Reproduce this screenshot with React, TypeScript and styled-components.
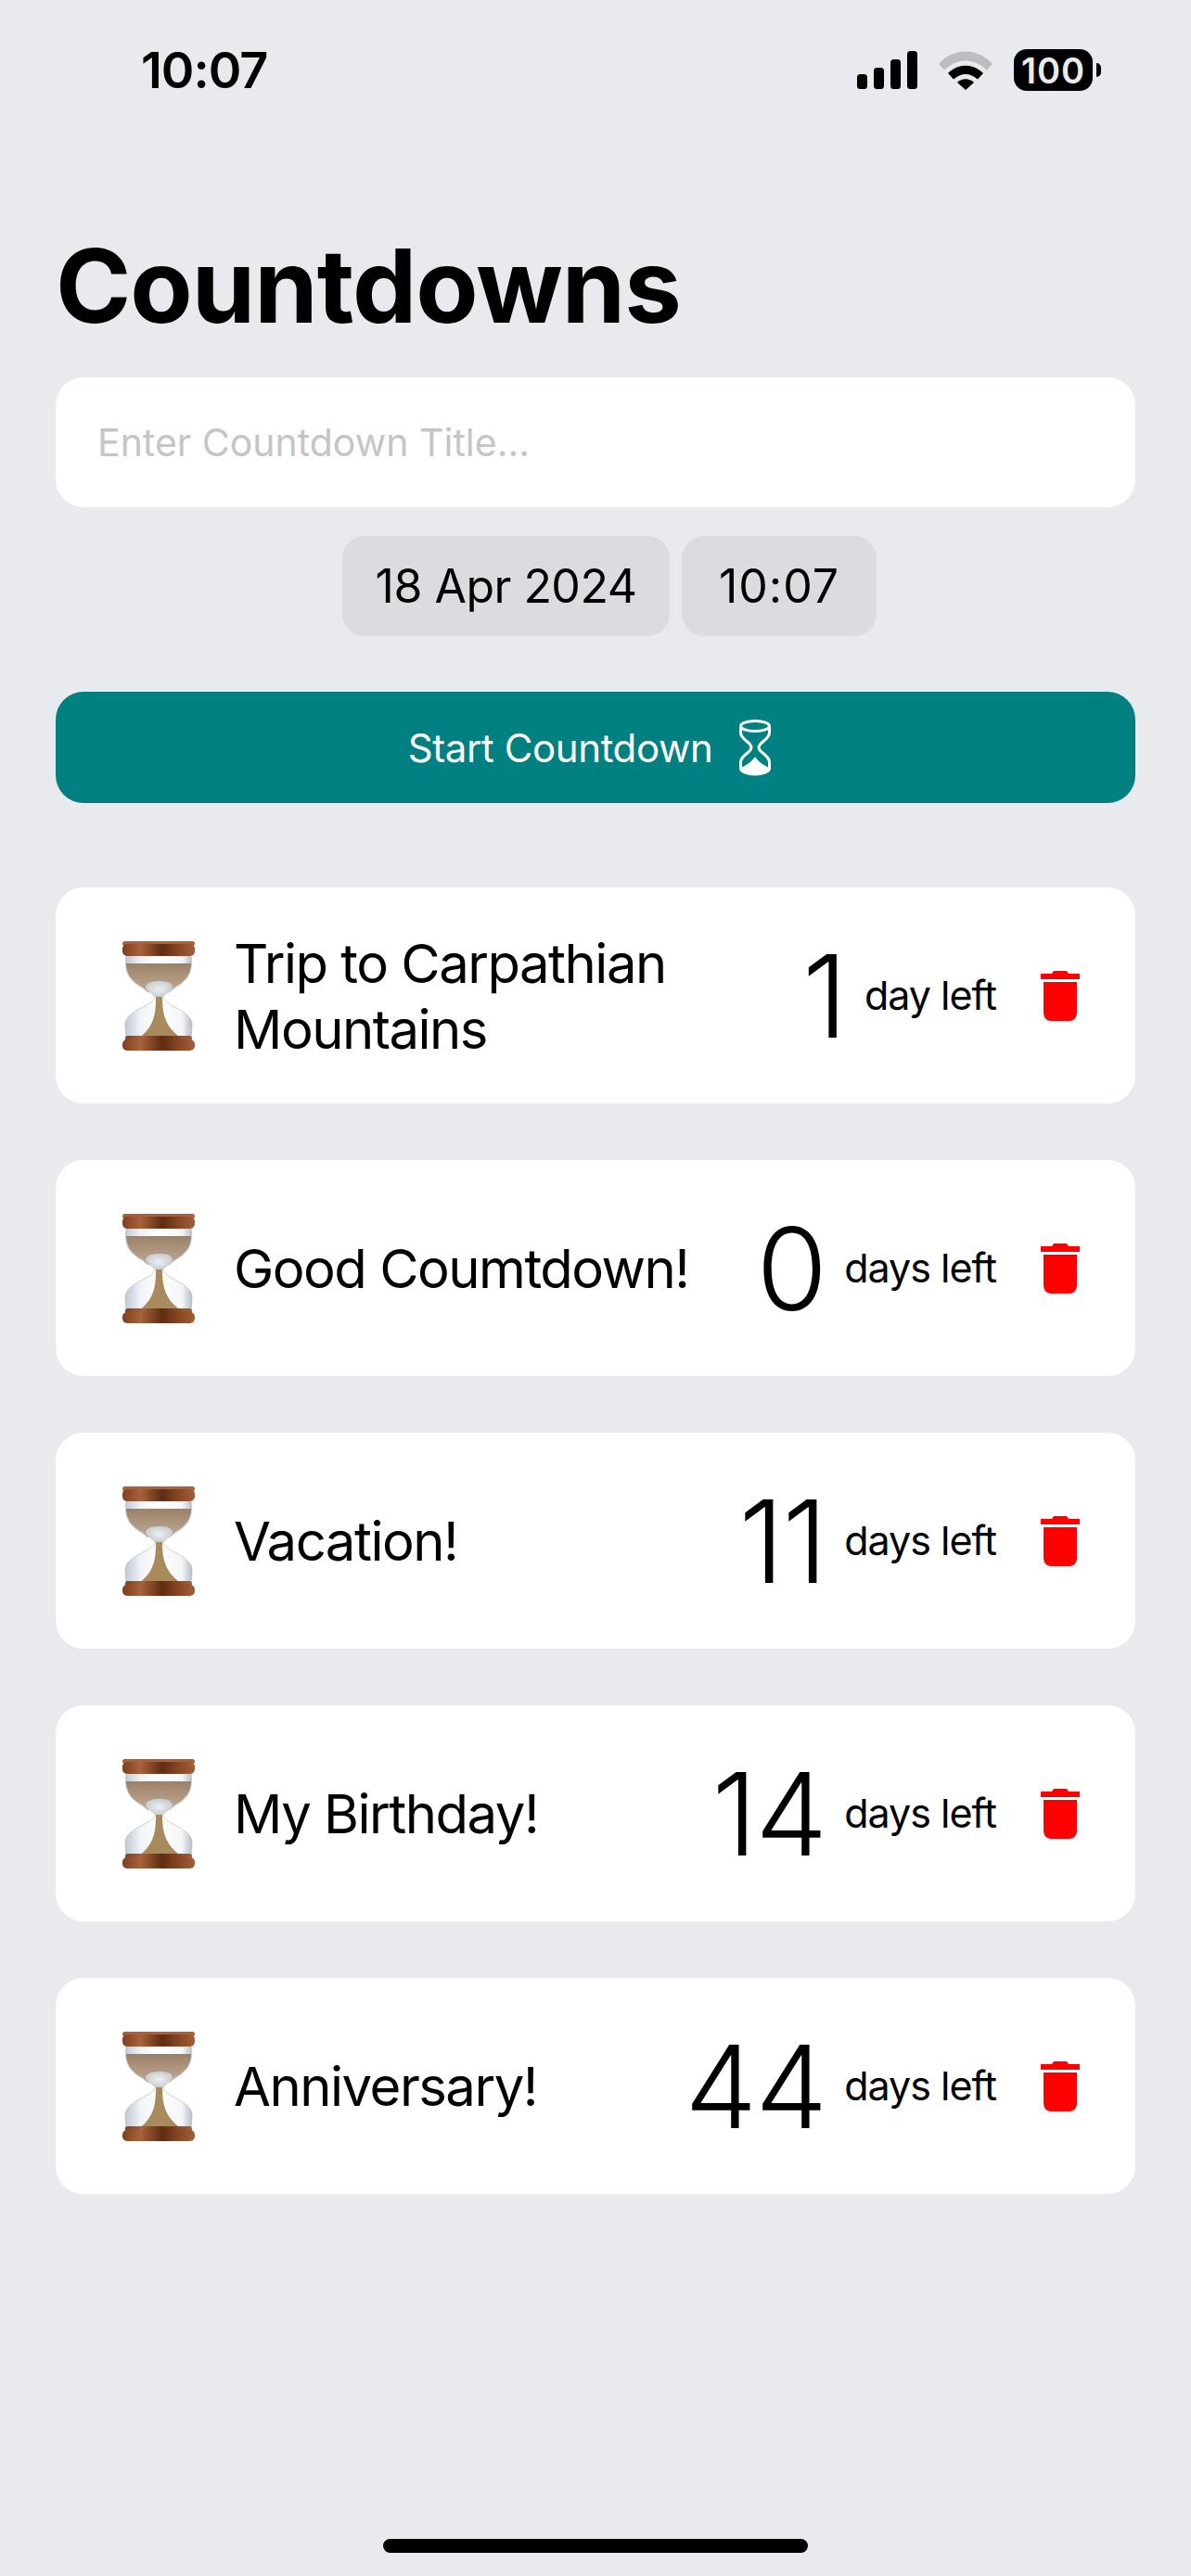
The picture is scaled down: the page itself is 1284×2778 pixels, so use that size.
import * as React from "react";
import styled, { createGlobalStyle } from "styled-components";

const countdowns = [
  { title: "Trip to Carpathian Mountains", days: 1, unit: "day left" },
  { title: "Good Coumtdown!", days: 0, unit: "days left" },
  { title: "Vacation!", days: 11, unit: "days left" },
  { title: "My Birthday!", days: 14, unit: "days left" },
  { title: "Anniversary!", days: 44, unit: "days left" },
];

const GlobalStyle = createGlobalStyle`
  html, body {
    margin: 0;
    padding: 0;
    background: #e9eaee;
  }
  * {
    box-sizing: border-box;
  }
`;

const Page = styled.div`
  width: 1284px;
  height: 2778px;
  display: flex;
  flex-direction: column;
  background: #e9eaee;
  color: #000;
  font-family: Inter, "Liberation Sans", sans-serif;
`;
const StatusBar = styled.div`
  height: 150px;
  padding: 45px 98px 0 152px;
  display: flex;
  justify-content: space-between;
  align-items: flex-start;
`;
const Clock = styled.span`
  font-size: 54px;
  line-height: 62px;
  font-weight: 600;
  letter-spacing: -1px;
`;
const StatusIcons = styled.div`
  display: flex;
  align-items: center;
  gap: 23px;
  padding-top: 8px;
`;
const Battery = styled.div`
  width: 85px;
  height: 45px;
  margin-right: 8px;
  border-radius: 14px;
  background: #000;
  color: #e9eaee;
  font-size: 38px;
  line-height: 46px;
  font-weight: 600;
  letter-spacing: 1px;
  text-align: center;
  position: relative;
  &::after {
    content: "";
    position: absolute;
    right: -9px;
    top: 15px;
    width: 5px;
    height: 15px;
    border-radius: 0 8px 8px 0;
    background: #000;
  }
`;
const Content = styled.main`
  padding: 0 60px;
  display: flex;
  flex-direction: column;
`;
const Title = styled.h1`
  margin: 127px 0 0;
  font-size: 110px;
  line-height: 62px;
  height: 62px;
  font-weight: 700;
  letter-spacing: -1px;
`;
const TitleInput = styled.input`
  margin-top: 68px;
  height: 140px;
  width: 100%;
  border: 0;
  outline: 0;
  border-radius: 30px;
  background: #fff;
  padding: 0 45px;
  font-family: inherit;
  font-size: 41px;
  color: #000;
  &::placeholder {
    color: #c5c5c7;
    opacity: 1;
  }
`;
const PickerRow = styled.div`
  margin-top: 31px;
  padding-left: 30px;
  display: flex;
  justify-content: center;
  gap: 13px;
`;
const Chip = styled.div<{ $width: number; $tracking: number }>`
  width: ${(props) => props.$width}px;
  height: 108px;
  border-radius: 24px;
  background: #dbdce0;
  display: flex;
  align-items: center;
  justify-content: center;
  font-size: 50px;
  letter-spacing: ${(props) => props.$tracking}px;
`;
const StartButton = styled.button`
  margin-top: 60px;
  height: 120px;
  padding: 0 12px 0 0;
  border: 0;
  border-radius: 30px;
  background: #008080;
  color: #fff;
  font-family: inherit;
  font-size: 42px;
  letter-spacing: -0.4px;
  display: flex;
  align-items: center;
  justify-content: center;
  gap: 28px;
`;
const List = styled.div`
  margin-top: 91px;
  display: flex;
  flex-direction: column;
  gap: 61px;
`;
const Card = styled.div`
  height: 233px;
  border-radius: 30px;
  background: #fff;
  padding: 0 60px 0 72px;
  display: flex;
  align-items: center;
`;
const Glass = styled.svg`
  width: 78px;
  height: 118px;
  flex: none;
`;
const CardTitle = styled.div`
  flex: 1;
  min-width: 0;
  margin-left: 42px;
  padding-top: 2px;
  font-size: 58px;
  line-height: 71px;
  letter-spacing: -1.5px;
`;
const DaysNumber = styled.div`
  font-size: 124px;
  line-height: 130px;
  font-weight: 300;
  letter-spacing: -2px;
`;
const DaysUnit = styled.div`
  margin-left: 20px;
  padding-bottom: 2px;
  font-size: 43px;
  letter-spacing: -1px;
`;
const DeleteButton = styled.div`
  margin-left: 48px;
  width: 42px;
  height: 54px;
  flex: none;
`;
const HomeIndicator = styled.div`
  margin: auto auto 25px;
  width: 458px;
  height: 15px;
  border-radius: 8px;
  background: #000;
`;

const SignalIcon = () => (
  <svg width="65" height="41" viewBox="0 0 65 41">
    <rect x="0" y="25" width="11" height="16" rx="3.5" />
    <rect x="18" y="18" width="11" height="23" rx="3.5" />
    <rect x="36" y="9" width="11" height="32" rx="3.5" />
    <rect x="54" y="0" width="11" height="41" rx="3.5" />
  </svg>
);

const WifiIcon = () => (
  <svg width="58" height="42" viewBox="0 0 58 42">
    <path d="M0 14 C16 -4 42 -4 58 14 L52 20.5 C38 7 20 7 6 20.5 Z" fill="#bdbdbf" />
    <path d="M10 24 C21 13 37 13 48 24 L42 30.5 C34 23 24 23 16 30.5 Z" />
    <path d="M20 34 C25 29 33 29 38 34 L29 42 Z" />
  </svg>
);

const HourglassOutline = () => (
  <svg width="36" height="62" viewBox="0 0 36 62" fill="none" stroke="#fff" strokeWidth="3">
    <ellipse cx="18" cy="8" rx="15.5" ry="5.5" />
    <path d="M2.5 8 V15 C2.5 23 14 25 14 31 C14 37 2.5 39 2.5 47 V54 C2.5 57 10 60 18 60 C26 60 33.5 57 33.5 54 V47 C33.5 39 22 37 22 31 C22 25 33.5 23 33.5 15 V8" />
    <path d="M3 53 C9 50 15 46 18 41 C21 46 27 50 33 53 V55 C30 58 24 60 18 60 C12 60 6 58 3 55 Z" fill="#fff" stroke="none" />
  </svg>
);

const TrashIcon = () => (
  <svg width="42" height="54" viewBox="0 0 42 54" fill="#ff0000">
    <path d="M0 3 H12 L14 0 H28 L30 3 H42 V9 H0 Z" />
    <path d="M3 12 H39 V45 C39 50 36 54 31 54 H11 C6 54 3 50 3 45 Z" />
  </svg>
);

const HourglassEmoji = ({ id }: { id: number }) => (
  <Glass viewBox="0 0 78 118">
    <defs>
      <linearGradient id={`wood${id}`} x1="0" x2="1" y1="0" y2="0">
        <stop offset="0" stopColor="#7d4020" />
        <stop offset="0.25" stopColor="#a9623a" />
        <stop offset="0.55" stopColor="#5f2c12" />
        <stop offset="0.8" stopColor="#8a4a26" />
        <stop offset="1" stopColor="#a35f36" />
      </linearGradient>
      <linearGradient id={`glass${id}`} x1="0" x2="1" y1="0" y2="0">
        <stop offset="0" stopColor="#bfc8d4" />
        <stop offset="0.22" stopColor="#eef1f6" />
        <stop offset="0.5" stopColor="#ffffff" />
        <stop offset="0.85" stopColor="#f4f5f7" />
        <stop offset="1" stopColor="#b6bdc7" />
      </linearGradient>
      <linearGradient id={`sand${id}`} x1="0" x2="0" y1="0" y2="1">
        <stop offset="0" stopColor="#9c8068" />
        <stop offset="1" stopColor="#c0aa92" />
      </linearGradient>
      <radialGradient id={`hollow${id}`}>
        <stop offset="0" stopColor="#eef0f2" />
        <stop offset="1" stopColor="#c9cdd0" />
      </radialGradient>
    </defs>
    <path d="M4 15 H74 C76 32 72 42 57 50 C48 55 44 56 44 60 C44 64 50 68 62 74 C70 79 76 84 75 92 L74 104 H4 L3 92 C2 84 8 79 16 74 C28 68 35 64 35 60 C35 56 30 55 21 50 C6 42 2 32 4 15 Z" fill={`url(#glass${id})`} stroke="#aeb5bf" strokeWidth="0.6" />
    <path d="M4 24 H74 C74 34 69 43 56 50 L51 55 H27 L22 50 C9 43 4 34 4 24 Z" fill={`url(#sand${id})`} />
    <path d="M25 50 C25 44 33 43 40 43 C47 43 54 44 54 50 C53 54 47 57 44 60 H35 C32 57 26 54 25 50 Z" fill={`url(#hollow${id})`} />
    <path d="M36 60 H43 C43 76 45 92 63 104 H18 C35 92 36 76 36 60 Z" fill="#a98a5c" />
    <rect x="0" y="0" width="78" height="5" rx="2.5" fill="#a7613c" />
    <rect x="0" y="3" width="78" height="13" rx="5" fill={`url(#wood${id})`} />
    <rect x="3" y="102" width="72" height="6" rx="3" fill={`url(#wood${id})`} />
    <rect x="0" y="106" width="78" height="12" rx="5" fill={`url(#wood${id})`} />
  </Glass>
);

export default function App() {
  return (
    <Page>
      <GlobalStyle />
      <StatusBar>
        <Clock>10:07</Clock>
        <StatusIcons>
          <SignalIcon />
          <WifiIcon />
          <Battery>100</Battery>
        </StatusIcons>
      </StatusBar>
      <Content>
        <Title>Countdowns</Title>
        <TitleInput placeholder="Enter Countdown Title..." readOnly />
        <PickerRow>
          <Chip $width={353} $tracking={-0.5}>18 Apr 2024</Chip>
          <Chip $width={210} $tracking={1}>10:07</Chip>
        </PickerRow>
        <StartButton>
          Start Countdown
          <HourglassOutline />
        </StartButton>
        <List>
          {countdowns.map((item, i) => (
            <Card key={item.title}>
              <HourglassEmoji id={i} />
              <CardTitle>{item.title}</CardTitle>
              <DaysNumber>{item.days}</DaysNumber>
              <DaysUnit>{item.unit}</DaysUnit>
              <DeleteButton>
                <TrashIcon />
              </DeleteButton>
            </Card>
          ))}
        </List>
      </Content>
      <HomeIndicator />
    </Page>
  );
}
